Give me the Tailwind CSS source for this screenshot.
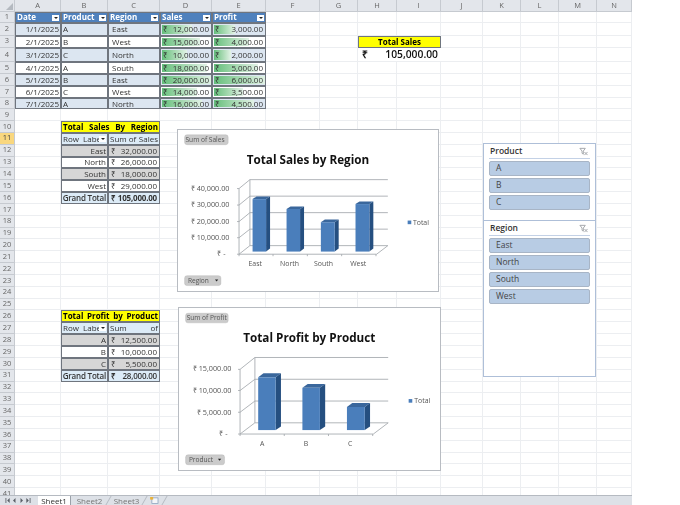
<!DOCTYPE html>
<html lang="en">
<head>
  <meta charset="UTF-8" />
  <title>Sales workbook</title>
  <script src="https://cdn.jsdelivr.net/npm/@tailwindcss/browser@4"></script>
</head>
<body class="bg-white w-[680px] h-[505px] overflow-hidden font-['Open_Sans',sans-serif]">
  <div class="relative w-[632px] h-[505px] overflow-hidden blur-[0.35px]">

    <!-- sheet grid, filled in below -->
    <div id="sheet" class="grid h-[495px] overflow-hidden grid-cols-[15px_46px_47px_52px_52px_54px_54px_38px_39px_44px_42px_38px_38px_38px_35px] grid-rows-[11.7px_11.6px_12.4px_12px_14.3px_12px_12px_12px_11.5px_11.5px_repeat(32,11.85px)] text-[8px] leading-none text-[#333]"></div>

    <!-- chart 1 -->
    <div class="absolute left-[177px] top-[129px] w-[262px] h-[163px] bg-white border border-[#b8bcc2]">
      <svg viewBox="20 28 788 487" class="w-full h-full" font-family="Open Sans" fill="#555">
        <g stroke="#a4a8ad" stroke-width="2.6" fill="none">
          <path d="M238 178H656M238 228H656M238 278H656M238 328H656M238 378H656" />
          <path d="M205 205L238 178M205 255L238 228M205 305L238 278M205 354L238 328M205 404L238 378" />
          <path d="M238 178V378M205 205V404H622L656 378" />
          <path d="M199 205H205M199 255H205M199 305H205M199 354H205M199 404H205M205 404V410M308 404V410M412 404V410M516 404V410M620 404V410" />
        </g>
        <g>
          <path d="M246 237L258 229H299L287 237Z" fill="#3a679c" /><path d="M287 237L299 229V387L287 396Z" fill="#254f80" /><rect x="246" y="237" width="41" height="159" fill="#4a7ebb" />
          <path d="M349 267L361 259H402L390 267Z" fill="#3a679c" /><path d="M390 267L402 259V387L390 396Z" fill="#254f80" /><rect x="349" y="267" width="41" height="129" fill="#4a7ebb" />
          <path d="M453 307L465 299H507L495 307Z" fill="#3a679c" /><path d="M495 307L507 299V387L495 396Z" fill="#254f80" /><rect x="453" y="307" width="42" height="89" fill="#4a7ebb" />
          <path d="M558 252L570 244H612L600 252Z" fill="#3a679c" /><path d="M600 252L612 244V387L600 396Z" fill="#254f80" /><rect x="558" y="252" width="42" height="144" fill="#4a7ebb" />
        </g>
        <text x="414" y="130" text-anchor="middle" font-size="35.5" font-weight="700" fill="#111">Total Sales by Region</text>
        <g font-size="22" text-anchor="end">
          <text x="176" y="212">₹ 40,000.00</text><text x="176" y="262">₹ 30,000.00</text><text x="176" y="311">₹ 20,000.00</text><text x="176" y="361">₹ 10,000.00</text><text x="164" y="410">₹ -</text>
        </g>
        <g font-size="21" text-anchor="middle">
          <text x="254" y="440">East</text><text x="358" y="440">North</text><text x="461" y="440">South</text><text x="566" y="440">West</text>
        </g>
        <rect x="716" y="302" width="11" height="11" fill="#4a7ebb" />
        <text x="732" y="314" font-size="21">Total</text>
        <rect x="40" y="42" width="132" height="30" rx="7" fill="#cbcbcb" stroke="#aaa" />
        <text x="102" y="63" font-size="20" text-anchor="middle">Sum of  Sales</text>
        <rect x="40" y="469" width="110" height="30" rx="7" fill="#cbcbcb" stroke="#aaa" />
        <text x="50" y="491" font-size="20">Region</text>
        <path d="M132 481H142L137 487Z" fill="#222" />
      </svg>
    </div>

    <!-- chart 2 -->
    <div class="absolute left-[178px] top-[307px] w-[263px] h-[164px] bg-white border border-[#b8bcc2]">
      <svg viewBox="25 22 787 491" class="w-full h-full" font-family="Open Sans" fill="#555">
        <g stroke="#a4a8ad" stroke-width="2.6" fill="none">
          <path d="M253 172H657M253 238H657M253 304H657M253 370H657" />
          <path d="M208 208L253 172M208 272L253 238M208 338L253 304M208 404L253 370" />
          <path d="M253 172V370M208 208V404H612L657 370" />
          <path d="M202 208H208M202 272H208M202 338H208M202 404H208M208 404V410M342 404V410M476 404V410M610 404V410" />
        </g>
        <g>
          <path d="M263 232L279 220H332L316 232Z" fill="#3a679c" /><path d="M316 232L332 220V381L316 392Z" fill="#254f80" /><rect x="263" y="232" width="53" height="160" fill="#4a7ebb" />
          <path d="M397 264L413 252H466L450 264Z" fill="#3a679c" /><path d="M450 264L466 252V381L450 392Z" fill="#254f80" /><rect x="397" y="264" width="53" height="128" fill="#4a7ebb" />
          <path d="M532 322L548 310H602L586 322Z" fill="#3a679c" /><path d="M586 322L602 310V381L586 392Z" fill="#254f80" /><rect x="532" y="322" width="54" height="70" fill="#4a7ebb" />
        </g>
        <text x="418" y="125" text-anchor="middle" font-size="35.5" font-weight="700" fill="#111">Total Profit by Product</text>
        <g font-size="22" text-anchor="end">
          <text x="182" y="214">₹ 15,000.00</text><text x="182" y="280">₹ 10,000.00</text><text x="182" y="345">₹ 5,000.00</text><text x="170" y="410">₹ -</text>
        </g>
        <g font-size="21" text-anchor="middle">
          <text x="275" y="440">A</text><text x="408" y="440">B</text><text x="542" y="440">C</text>
        </g>
        <rect x="719" y="298" width="11" height="11" fill="#4a7ebb" />
        <text x="736" y="311" font-size="21">Total</text>
        <rect x="43" y="38" width="129" height="29" rx="7" fill="#cbcbcb" stroke="#aaa" />
        <text x="107" y="58" font-size="20" text-anchor="middle">Sum of  Profit</text>
        <rect x="43" y="467" width="118" height="30" rx="7" fill="#cbcbcb" stroke="#aaa" />
        <text x="53" y="489" font-size="20">Product</text>
        <path d="M141 479H151L146 485Z" fill="#222" />
      </svg>
    </div>

    <!-- slicers -->
    <div class="absolute left-[483px] top-[143px] w-[113px] h-[234px] flex flex-col bg-white border border-[#aebfd8] text-[8.5px] text-[#444]">
      <div class="h-[77px] flex flex-col gap-[2px] px-[5px] border-b border-[#aebfd8]">
        <div class="flex items-center justify-between h-[15px] border-b border-[#c3d1e6] font-semibold text-[#333] pl-[1px] pr-[2px]">
          <span>Product</span>
          <svg viewBox="0 0 10 10" class="w-[9px] h-[9px]" fill="none" stroke="#a5a8ac" stroke-width="1.1"><path d="M1 1.5H7L4.8 4.5V8L3.4 7V4.5Z" /><path d="M6 5.5L9.5 9M9.5 5.5L6 9" /></svg>
        </div>
        <div class="h-[15px] flex items-center pl-[6px] rounded-[2px] bg-[#b8cce4] border border-[#a8b5c6]">A</div>
        <div class="h-[15px] flex items-center pl-[6px] rounded-[2px] bg-[#b8cce4] border border-[#a8b5c6]">B</div>
        <div class="h-[15px] flex items-center pl-[6px] rounded-[2px] bg-[#b8cce4] border border-[#a8b5c6]">C</div>
      </div>
      <div class="flex flex-col gap-[2px] px-[5px]">
        <div class="flex items-center justify-between h-[15px] border-b border-[#c3d1e6] font-semibold text-[#333] pl-[1px] pr-[2px]">
          <span>Region</span>
          <svg viewBox="0 0 10 10" class="w-[9px] h-[9px]" fill="none" stroke="#a5a8ac" stroke-width="1.1"><path d="M1 1.5H7L4.8 4.5V8L3.4 7V4.5Z" /><path d="M6 5.5L9.5 9M9.5 5.5L6 9" /></svg>
        </div>
        <div class="h-[15px] flex items-center pl-[6px] rounded-[2px] bg-[#b8cce4] border border-[#a8b5c6]">East</div>
        <div class="h-[15px] flex items-center pl-[6px] rounded-[2px] bg-[#b8cce4] border border-[#a8b5c6]">North</div>
        <div class="h-[15px] flex items-center pl-[6px] rounded-[2px] bg-[#b8cce4] border border-[#a8b5c6]">South</div>
        <div class="h-[15px] flex items-center pl-[6px] rounded-[2px] bg-[#b8cce4] border border-[#a8b5c6]">West</div>
      </div>
    </div>

    <!-- sheet tabs -->
    <div class="flex items-stretch h-[10px] bg-[#dde1e7] border-t border-[#b5bac1] text-[8px] leading-none text-[#777]">
      <div class="w-[38px] flex items-center gap-[5px] pl-[4px] text-[#555]">
        <svg viewBox="0 0 30 6" class="w-[28px] h-[5px]" fill="#5a5f67"><path d="M0 0H1V6H0ZM5 0V6L2 3ZM12 0V6L9 3ZM18 0L21 3L18 6ZM25 0L28 3L25 6ZM29 0H30V6H29Z" /></svg>
      </div>
      <div class="w-[33px] flex items-center justify-center bg-white text-[#333] border-r border-[#9ba1a9]">Sheet1</div>
      <div class="w-[38px] flex items-center justify-center border-r border-[#b5bac1] -skew-x-[30deg]"><span class="skew-x-[30deg]">Sheet2</span></div>
      <div class="w-[36px] flex items-center justify-center border-r border-[#b5bac1] -skew-x-[30deg]"><span class="skew-x-[30deg]">Sheet3</span></div>
      <div class="w-[20px] flex items-center justify-center border-r border-[#b5bac1] -skew-x-[30deg]">
        <svg viewBox="0 0 10 8" class="w-[9px] h-[7px] skew-x-[30deg]"><rect x="2" y="1" width="7" height="6.5" fill="#f4f6f9" stroke="#7f9ab8" stroke-width=".8" /><rect x="0" y="0" width="3.5" height="3" fill="#e8b23a" /></svg>
      </div>
    </div>
  </div>

  <script>
    const cols = ['', 'A', 'B', 'C', 'D', 'E', 'F', 'G', 'H', 'I', 'J', 'K', 'L', 'M', 'N'];
    const cell = {};

    const edge = 'border-[0.5px] border-[#6f757e] ';
    const filterBtn = '<span class="absolute right-[1px] bottom-[1px] w-[7px] h-[6px] bg-white flex items-center justify-center"><span class="w-0 h-0 border-x-[2px] border-x-transparent border-t-[2px] border-t-[#222]"></span></span>';
    const rupee = (num, extra) => `<span class="relative flex justify-between w-full px-[2px] ${extra || ''}"><span>₹</span><span>${num}</span></span>`;

    // table
    ['Date', 'Product', 'Region', 'Sales', 'Profit'].forEach((h, i) => {
      cell[cols[i + 1] + 1] = { html: `<span class="self-start pl-[1px]">${h}</span>` + filterBtn, cls: edge + 'bg-[#4f81bd] text-white font-bold' };
    });
    const rows = [
      ['1/1/2025', 'A', 'East', '12,000.00', '3,000.00', 30, 21],
      ['2/1/2025', 'B', 'West', '15,000.00', '4,000.00', 38, 35],
      ['3/1/2025', 'C', 'North', '10,000.00', '2,000.00', 25, 17],
      ['4/1/2025', 'A', 'South', '18,000.00', '5,000.00', 45, 44],
      ['5/1/2025', 'B', 'East', '20,000.00', '6,000.00', 50, 52],
      ['6/1/2025', 'C', 'West', '14,000.00', '3,500.00', 35, 29],
      ['7/1/2025', 'A', 'North', '16,000.00', '4,500.00', 40, 40],
    ];
    rows.forEach((r, i) => {
      const n = i + 2;
      const band = i % 2 === 0 ? 'bg-[#dce6f1] ' : 'bg-white ';
      const bar = w => `<span class="absolute left-[1px] top-[1px] bottom-[1px] bg-linear-to-r from-[#63be7b] to-[#e3f3e7]" style="width:${w}px"></span>`;
      cell['A' + n] = { html: r[0], cls: edge + band + 'justify-end pr-[1px]' };
      cell['B' + n] = { html: r[1], cls: edge + band + 'pl-[1px]' };
      cell['C' + n] = { html: r[2], cls: edge + band + 'pl-[3px]' };
      cell['D' + n] = { html: bar(r[5]) + rupee(r[3]), cls: edge + band };
      cell['E' + n] = { html: bar(r[6]) + rupee(r[4]), cls: edge + band };
    });

    // pivot tables
    function pivot(top, title, head2, lines, grand, boldGrand) {
      cell['B' + top] = { html: title, cls: 'col-span-2 justify-between px-[1px] border-[0.5px] border-[#6f757e] bg-[#ffff00] text-black font-bold' };
      cell['C' + top] = { skip: true };
      cell['B' + (top + 1)] = { html: '<span class="pl-[1px]">Row&nbsp; Labe</span>' + filterBtn.replace('bottom-[1px]', 'bottom-[2px]'), cls: edge + 'bg-[#dcebf7]' };
      cell['C' + (top + 1)] = { html: head2, cls: edge + 'bg-[#dcebf7] px-[1px] justify-between' };
      lines.forEach((l, i) => {
        const n = top + 2 + i;
        const bg = i % 2 === 0 ? 'bg-[#d6d6d6] ' : 'bg-white ';
        cell['B' + n] = { html: l[0], cls: edge + bg + 'justify-end pr-[1px]' };
        cell['C' + n] = { html: rupee(l[1]), cls: edge + bg };
      });
      const g = top + 2 + lines.length;
      cell['B' + g] = { html: 'Grand Total', cls: edge + 'bg-[#dcebf7] font-semibold justify-end pr-[1px] tracking-[-0.2px]' };
      cell['C' + g] = { html: rupee(grand, boldGrand ? 'font-bold tracking-[-0.2px]' : 'font-semibold tracking-[-0.2px]'), cls: edge + 'bg-[#dcebf7]' };
    }
    pivot(10, '<span>Total</span><span>Sales</span><span>By</span><span>Region</span>', '<span>Sum of</span><span>Sales</span>',
      [['East', '32,000.00'], ['North', '26,000.00'], ['South', '18,000.00'], ['West', '29,000.00']], '105,000.00', true);
    pivot(26, '<span>Total</span><span>Profit</span><span>by</span><span>Product</span>', '<span>Sum</span><span>of</span>',
      [['A', '12,500.00'], ['B', '10,000.00'], ['C', '5,500.00']], '28,000.00', false);

    // KPI
    cell['H3'] = { html: 'Total Sales', cls: 'col-span-2 justify-center border-[0.5px] border-[#6f757e] bg-[#ffff00] text-black font-bold' };
    cell['I3'] = { skip: true };
    cell['H4'] = { html: '<span class="flex justify-between w-full pl-[4px] pr-[3px]"><span>₹</span><span>105,000.00</span></span>', cls: 'col-span-2 text-[10.3px] font-semibold text-[#111] border-b border-[#eceef1]' };
    cell['I4'] = { skip: true };

    const sheet = document.getElementById('sheet');
    let html = '';
    const head = 'flex items-center justify-center bg-[#e3e6eb] border-r border-b border-[#c6cad0] text-[7.5px] text-[#666]';
    for (let r = 0; r <= 41; r++) {
      for (let c = 0; c < cols.length; c++) {
        if (r === 0) {
          html += c === 0
            ? `<div class="${head} relative"><svg viewBox="0 0 8 8" class="absolute right-[1px] bottom-[1px] w-[7px] h-[7px]"><path d="M8 0V8H0Z" fill="#b4b9c0"/></svg></div>`
            : `<div class="${head}">${cols[c]}</div>`;
        } else if (c === 0) {
          html += `<div class="${head}${r === 11 ? ' bg-[#f9d77e]! text-[#444]!' : ''}">${r}</div>`;
        } else {
          const data = cell[cols[c] + r];
          if (data && data.skip) continue;
          if (data) html += `<div class="relative flex items-center min-w-0 overflow-hidden whitespace-nowrap ${data.cls}">${data.html}</div>`;
          else html += '<div class="border-r border-b border-[#eceef1]"></div>';
        }
      }
    }
    sheet.innerHTML = html;
  </script>
</body>
</html>
